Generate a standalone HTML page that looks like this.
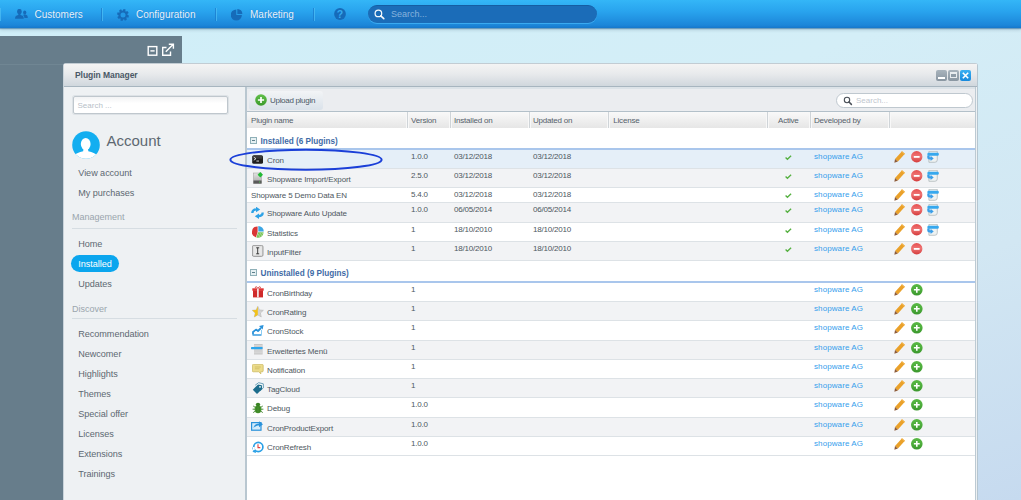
<!DOCTYPE html>
<html><head><meta charset="utf-8"><style>
*{box-sizing:border-box}
html,body{margin:0;padding:0}
body{width:1021px;height:500px;overflow:hidden;position:relative;font-family:"Liberation Sans",sans-serif;
background:linear-gradient(160deg,#cfeef8 0%,#d4eef7 40%,#d2e7f3 70%,#c6daef 100%);}
.abs{position:absolute}
#top{position:absolute;left:0;top:0;width:1021px;height:28px;background:linear-gradient(#34b6f7 0%,#29a4ee 40%,#1c86d9 90%,#1677cb 100%);box-shadow:0 1px 1px rgba(20,90,150,.45),0 2px 3px rgba(70,110,130,.25)}
#top .sep{position:absolute;top:8px;width:2px;height:13px;border-left:1px solid #1b7acb;border-right:1px solid #4fc0f5;opacity:.7}
#top .lbl{position:absolute;top:9px;font-size:10px;line-height:11px;color:#e6f4fd;text-shadow:0 0 1px #1a6fc0}
#top svg{position:absolute}
#srch{position:absolute;left:368px;top:5px;width:229px;height:18px;border-radius:9px;background:#1b6cb8;border-top:1px solid #155da3;box-shadow:0 1px 0 #3aaaf0}
#srch span{position:absolute;left:23px;top:3px;font-size:9px;color:#86b3dd;line-height:11px}
#panel{position:absolute;left:0;top:36px;width:182px;height:464px;background:#677d8b}
#win{position:absolute;left:63px;top:63px;width:915px;height:460px;border:1px solid #c9d3da;border-top-color:#c2ccd3;border-right-color:#b6c6d0;border-radius:3px 3px 0 0;background:#eef1f3}
#whead{position:absolute;left:0;top:0;width:913px;height:23px;background:linear-gradient(#f4f4f4,#e8eaec 45%,#d0d7dd);border-bottom:1px solid #a7b5bf}
#whead .ttl{position:absolute;left:11px;top:6px;font-size:8.5px;font-weight:bold;color:#4a5866;line-height:10px;letter-spacing:-0.05px}
.wb{position:absolute;top:6px;width:11px;height:11px;border-radius:2px}
#side{position:absolute;left:0;top:23px;width:181px;height:440px;background:#eef1f3}
#sfield{position:absolute;left:8.5px;top:9px;width:155px;height:18px;border:1px solid #bfc7cd;border-radius:2px;background:linear-gradient(#f2f3f4,#fff 40%);box-shadow:0 0 0 1px #dde2e6}
#sfield span{position:absolute;left:4px;top:3.5px;font-size:8px;color:#b7c0c8;line-height:10px}
.sn{position:absolute;left:14.3px;font-size:9.1px;line-height:11px;color:#5d6871;letter-spacing:-0.05px}
.sn.act{color:#fff}
.sh{position:absolute;left:8px;font-size:9px;line-height:11px;color:#9aa5ad}
.sline{position:absolute;left:8px;width:165px;height:1px;background:#d6dde2}
#grid{position:absolute;left:181px;top:23px;width:731px;height:440px;background:#fff;border-left:2px solid #b9c7d0;border-right:1px solid #bccad3}
#tbar{position:absolute;left:0;top:0;width:728px;height:25px;background:#ebedf0;border-top:2px solid #dce3e8;border-bottom:1px solid #b3c0c9}
#ubtn{position:absolute;left:2px;top:1.5px;width:74px;height:19px;border-radius:3px;background:linear-gradient(#f2f4f6,#dae2ea);}
#ubtn span{position:absolute;left:21px;top:5px;font-size:8px;color:#4a5866;line-height:9px;letter-spacing:-0.3px}
#gsrch{position:absolute;left:589px;top:4px;width:137px;height:15px;border-radius:8px;border:1px solid #bfc8cf;background:#fff}
#gsrch span{position:absolute;left:19px;top:2px;font-size:8px;color:#bfc7cf;line-height:9px}
#ghead{position:absolute;left:0;top:25px;width:728px;height:16px;background:linear-gradient(#f9f9f9,#e6e6e6);}
#ghead .h{position:absolute;top:4px;font-size:8px;line-height:9px;color:#55606a;letter-spacing:-0.2px}
#ghead .cs{position:absolute;top:0;width:1px;height:16px;background:#cfd4d8;box-shadow:-1px 0 0 #f8f8f8,1px 0 0 #f8f8f8}
.row{position:absolute;left:0;width:728px;border-bottom:1px solid #dde2e6;}
.row .t{position:absolute;top:1.5px;font-size:8px;line-height:9px;color:#4d5760;white-space:nowrap}
.row .v{letter-spacing:-0.2px}
.row .nm{letter-spacing:-0.12px}
.row .dev{color:#379eec;letter-spacing:0.1px}
.row .ic{position:absolute;line-height:0}
.row .ic svg{display:block}
.grp{position:absolute;left:0;width:728px;background:#fff;border-bottom:2px solid #a9c6ec}
.grp span.gt{position:absolute;left:13.5px;font-size:8.2px;font-weight:bold;line-height:9px;color:#3f6ba6}
.grp .gi{position:absolute;left:3px;width:7px;height:7px;border:1px solid #8fb0b8;background:#e6f0f2}
.grp .gi:after{content:"";position:absolute;left:1px;top:2px;width:3px;height:1px;background:#5d808c}

</style></head><body>
<div id="top">
  <div class="sep" style="left:-1px"></div>
  <svg style="left:15px;top:9px" width="13" height="11" viewBox="0 0 13 11"><ellipse cx="4.4" cy="2.6" rx="2.3" ry="2.7" fill="#166bb9"/><rect x="3.3" y="4.6" width="2.2" height="2" fill="#166bb9"/><path d="M0 9.8 C0 7.4 1.2 6.5 3.2 6.1 H5.6 C7.6 6.5 8.8 7.4 8.8 9.8Z" fill="#166bb9"/><ellipse cx="9.7" cy="3.5" rx="1.6" ry="1.9" fill="#166bb9"/><path d="M8.6 5.6 H10.6 C12 6 12.8 6.8 12.8 8.9 H9.4 C9.3 7.6 9 6.6 8.2 6.2Z" fill="#166bb9"/></svg>
  <span class="lbl" style="left:34.5px">Customers</span>
  <div class="sep" style="left:101px"></div>
  <svg style="left:117px;top:8.8px" width="12" height="12" viewBox="0 0 12 12"><path d="M10.37 5.52 L11.96 6.65 L11.38 8.65 L9.76 8.28 L9.43 8.75 L9.76 10.68 L7.93 11.68 L7.05 10.27 L6.48 10.37 L5.35 11.96 L3.35 11.38 L3.72 9.76 L3.25 9.43 L1.32 9.76 L0.32 7.93 L1.73 7.05 L1.63 6.48 L0.04 5.35 L0.62 3.35 L2.24 3.72 L2.57 3.25 L2.24 1.32 L4.07 0.32 L4.95 1.73 L5.52 1.63 L6.65 0.04 L8.65 0.62 L8.28 2.24 L8.75 2.57 L10.68 2.24 L11.68 4.07 L10.27 4.95Z" fill="#166bb9"/><circle cx="6" cy="6" r="2.5" fill="#2398e6"/></svg>
  <span class="lbl" style="left:136px">Configuration</span>
  <div class="sep" style="left:215px"></div>
  <svg style="left:231px;top:8.5px" width="12" height="12" viewBox="0 0 12 12"><path d="M5.3 0.4 V6 H10.9 A5.6 5.6 0 1 1 5.3 0.4Z" fill="#166bb9"/><path d="M6.3 0.1 A5.4 5.4 0 0 1 11.4 5 H6.3Z" fill="#166bb9"/></svg>
  <span class="lbl" style="left:250px">Marketing</span>
  <div class="sep" style="left:313px"></div>
  <svg style="left:334px;top:7.8px" width="12" height="12" viewBox="0 0 12 12"><circle cx="6" cy="6" r="5.9" fill="#166bb9"/><text x="6" y="9.8" text-anchor="middle" font-family="Liberation Sans" font-weight="bold" font-size="10.5" fill="#35aaf0">?</text></svg>
  <div id="srch"><svg style="left:6px;top:2.8px" width="12" height="12" viewBox="0 0 12 12"><circle cx="4.4" cy="4.4" r="3.3" stroke="#f4f8fc" stroke-width="1.25" fill="none"/><path d="M6.8 6.8 L9.8 9.6" stroke="#f4f8fc" stroke-width="1.6" stroke-linecap="round"/></svg><span>Search...</span></div>
</div>
<div id="panel">
  <div class="abs" style="left:0;top:28px;width:63px;height:1px;background:#708693"></div>
  <svg style="position:absolute;left:147px;top:6px" width="28" height="14" viewBox="0 0 28 14"><rect x="1.2" y="4.6" width="8.6" height="8.6" stroke="#fff" stroke-width="1.4" fill="none"/><rect x="3.4" y="8.2" width="4.2" height="1.4" fill="#fff"/><path d="M19.5 5.5 H15.7 V13.2 H23.5 V9.5" stroke="#fff" stroke-width="1.4" fill="none"/><path d="M18.8 9.8 L26 2.6 M21.8 2.2 H26.4 V6.8" stroke="#fff" stroke-width="1.4" fill="none"/></svg>
</div>
<div id="win">
  <div id="whead"><span class="ttl">Plugin Manager</span>
    <div class="wb" style="left:872px;background:linear-gradient(#a9b4bd,#8996a1)"><div class="abs" style="left:2px;top:7px;width:7px;height:2px;background:#fff"></div></div>
    <div class="wb" style="left:884px;background:linear-gradient(#a9b4bd,#8996a1)"><div class="abs" style="left:2px;top:2px;width:7px;height:6px;border:1px solid #e8ecef;border-top-width:2px;background:#8f9ca7"></div></div>
    <div class="wb" style="left:896px;background:linear-gradient(#3bb0f2,#1789dc)"><svg style="position:absolute;left:2px;top:2px" width="7" height="7" viewBox="0 0 7 7"><path d="M0.8 0.8 L6.2 6.2 M6.2 0.8 L0.8 6.2" stroke="#fff" stroke-width="1.6"/></svg></div>
  </div>
  <div id="side">
    <div id="sfield"><span>Search ...</span></div>
    <svg style="position:absolute;left:7.7px;top:43.7px" width="28" height="28" viewBox="0 0 28 28"><defs><clipPath id="cc"><circle cx="14" cy="14" r="13.8"/></clipPath></defs><circle cx="14" cy="14" r="13.8" fill="#13aef0"/><g clip-path="url(#cc)" fill="#fff"><ellipse cx="13.7" cy="13" rx="4.9" ry="6"/><path d="M11.5 17 H16 L16.3 20.3 C20.5 21.3 23.5 22.5 25 24.5 V29 H2 V24.5 C4 22.5 7 21.3 11.2 20.3Z"/></g></svg>
    <div class="abs" style="left:42.5px;top:45px;font-size:15px;line-height:17px;color:#5d6871">Account</div>
    <div class="sh" style="top:124.5px">Management</div>
    <div class="sline" style="top:140.5px"></div>
    <div class="abs" style="left:7px;top:168px;width:48px;height:17px;border-radius:9px;background:#0ba6ee"></div>
    <div class="sh" style="top:216.5px">Discover</div>
    <div class="sline" style="top:231px"></div>
    <div class="sn" style="top:80.9px">View account</div>
<div class="sn" style="top:100.9px">My purchases</div>
<div class="sn" style="top:151.9px">Home</div>
<div class="sn act" style="top:171.89999999999998px">Installed</div>
<div class="sn" style="top:191.89999999999998px">Updates</div>
<div class="sn" style="top:241.89999999999998px">Recommendation</div>
<div class="sn" style="top:261.9px">Newcomer</div>
<div class="sn" style="top:281.9px">Highlights</div>
<div class="sn" style="top:301.9px">Themes</div>
<div class="sn" style="top:321.9px">Special offer</div>
<div class="sn" style="top:341.9px">Licenses</div>
<div class="sn" style="top:361.9px">Extensions</div>
<div class="sn" style="top:381.9px">Trainings</div>
  </div>
  <div id="grid">
    <div id="tbar">
      <div id="ubtn"><svg style="position:absolute;left:6px;top:3.5px" width="12" height="12" viewBox="0 0 12 12"><defs><linearGradient id="gg2" x1="0" y1="0" x2="0" y2="1"><stop offset="0" stop-color="#62c04a"/><stop offset="1" stop-color="#3a9a2c"/></linearGradient></defs><circle cx="6" cy="6" r="5.8" fill="url(#gg2)"/><path d="M6 2.9 V9.1 M2.9 6 H9.1" stroke="#fff" stroke-width="1.7"/></svg><span>Upload plugin</span></div>
      <div id="gsrch"><svg style="position:absolute;left:6px;top:2px" width="10" height="10" viewBox="0 0 10 10"><circle cx="4" cy="4" r="2.7" stroke="#4a5058" stroke-width="1.1" fill="none"/><path d="M6 6 L8.4 8.4" stroke="#4a5058" stroke-width="1.5" stroke-linecap="round"/></svg><span>Search...</span></div>
    </div>
    <div id="ghead">
      <span class="h" style="left:4px">Plugin name</span>
      <div class="cs" style="left:160px"></div><span class="h" style="left:164px">Version</span>
      <div class="cs" style="left:203px"></div><span class="h" style="left:207px">Installed on</span>
      <div class="cs" style="left:282px"></div><span class="h" style="left:286px">Updated on</span>
      <div class="cs" style="left:361px"></div><span class="h" style="left:366.3px">License</span>
      <div class="cs" style="left:520px"></div><span class="h" style="left:531px">Active</span>
      <div class="cs" style="left:563px"></div><span class="h" style="left:567px">Developed by</span>
      <div class="cs" style="left:642px"></div>
    </div>
    <div class="grp" style="top:41px;height:22px"><div class="gi" style="top:9px"></div><span class="gt" style="top:8.5px">Installed (6 Plugins)</span></div>
    <div class="row" style="top:63px;height:19px;background:#e5eff8">
<span class="ic" style="left:5px;top:4.7px"><svg width="12" height="10" viewBox="0 0 12 10"><rect x="0.2" y="0.2" width="10.8" height="8.6" rx="1.6" fill="#1e1e1e"/><rect x="0.8" y="0.8" width="9.6" height="3" rx="1" fill="#3a3a3a"/><path d="M1.8 2.2 L4 3.7 L1.8 5.2" stroke="#e8e8e8" stroke-width="0.9" fill="none"/><rect x="4.4" y="5.6" width="2.6" height="0.9" fill="#e8e8e8"/></svg></span>
<span class="t nm" style="left:20px;top:6px">Cron</span>
<span class="t v" style="left:164px">1.0.0</span>
<span class="t v" style="left:207px">03/12/2018</span>
<span class="t v" style="left:286px">03/12/2018</span>
<span class="ic" style="left:538px;top:4.6px"><svg width="8" height="6" viewBox="0 0 8 6"><path d="M0.6 2.5 L2.4 4.2 L6.1 0.7" stroke="#55b040" stroke-width="1.35" fill="none"/></svg></span>
<span class="t dev" style="left:567px">shopware AG</span>
<span class="ic" style="left:646.5px;top:1px"><svg width="12" height="13" viewBox="0 0 12 13"><path d="M8 0.2 L10.9 2.7 L3.9 10.6 L1 8.1Z" fill="#eaa12a"/><path d="M8 0.2 L10.9 2.7 L10.2 3.5 L7.3 1Z" fill="#f2b44a"/><path d="M1 8.1 L3.9 10.6 L0.4 11.8Z" fill="#8c5a38"/></svg></span>
<span class="ic" style="left:663.5px;top:1px"><svg width="12" height="12" viewBox="0 0 12 12"><defs><linearGradient id="rg" x1="0" y1="0" x2="0" y2="1"><stop offset="0" stop-color="#e65050"/><stop offset="0.45" stop-color="#ee7474"/><stop offset="1" stop-color="#d43c3c"/></linearGradient></defs><circle cx="5.7" cy="5.8" r="5.7" fill="url(#rg)"/><rect x="2.8" y="5" width="5.8" height="1.8" fill="#fff"/></svg></span>
<span class="ic" style="left:680px;top:1.2px"><svg width="13" height="12" viewBox="0 0 13 12"><path d="M1.9 0.3 H10.3 V8.8 Q10.3 11.3 7.8 11.3 H1.9Z" fill="#eef2f2" stroke="#a9b2b4" stroke-width="0.7"/><rect x="0.4" y="1.8" width="11.4" height="3" rx="1.2" fill="#36a8ee"/><path d="M1.4 4.4 V6.4 Q1.4 7.4 2.4 7.4 H4" stroke="#3a9ee8" stroke-width="2.3" fill="none"/><path d="M3.6 4.7 L6.7 7.4 L3.6 10.1Z" fill="#3a9ee8"/></svg></span>
</div>
<div class="row" style="top:82px;height:19px;background:#f2f3f5">
<span class="ic" style="left:6px;top:3px"><svg width="12" height="12" viewBox="0 0 12 12"><defs><linearGradient id="ig" x1="0" y1="0" x2="0" y2="1"><stop offset="0" stop-color="#e4e4e4"/><stop offset="0.7" stop-color="#b8b8b8"/><stop offset="1" stop-color="#8a8a8a"/></linearGradient></defs><rect x="0.5" y="1" width="8" height="10.5" fill="url(#ig)" stroke="#9a9a9a" stroke-width="0.5"/><rect x="0.5" y="8.5" width="8" height="3" fill="#5a5a5a"/><rect x="6" y="9.6" width="1.2" height="0.9" fill="#5c5"/><path d="M7.3 0 L10 2.7 L7.3 5.4 L4.6 2.7Z" fill="#22bb33"/></svg></span>
<span class="t nm" style="left:20px;top:6px">Shopware Import/Export</span>
<span class="t v" style="left:164px">2.5.0</span>
<span class="t v" style="left:207px">03/12/2018</span>
<span class="t v" style="left:286px">03/12/2018</span>
<span class="ic" style="left:538px;top:4.6px"><svg width="8" height="6" viewBox="0 0 8 6"><path d="M0.6 2.5 L2.4 4.2 L6.1 0.7" stroke="#55b040" stroke-width="1.35" fill="none"/></svg></span>
<span class="t dev" style="left:567px">shopware AG</span>
<span class="ic" style="left:646.5px;top:1px"><svg width="12" height="13" viewBox="0 0 12 13"><path d="M8 0.2 L10.9 2.7 L3.9 10.6 L1 8.1Z" fill="#eaa12a"/><path d="M8 0.2 L10.9 2.7 L10.2 3.5 L7.3 1Z" fill="#f2b44a"/><path d="M1 8.1 L3.9 10.6 L0.4 11.8Z" fill="#8c5a38"/></svg></span>
<span class="ic" style="left:663.5px;top:1px"><svg width="12" height="12" viewBox="0 0 12 12"><defs><linearGradient id="rg" x1="0" y1="0" x2="0" y2="1"><stop offset="0" stop-color="#e65050"/><stop offset="0.45" stop-color="#ee7474"/><stop offset="1" stop-color="#d43c3c"/></linearGradient></defs><circle cx="5.7" cy="5.8" r="5.7" fill="url(#rg)"/><rect x="2.8" y="5" width="5.8" height="1.8" fill="#fff"/></svg></span>
<span class="ic" style="left:680px;top:1.2px"><svg width="13" height="12" viewBox="0 0 13 12"><path d="M1.9 0.3 H10.3 V8.8 Q10.3 11.3 7.8 11.3 H1.9Z" fill="#eef2f2" stroke="#a9b2b4" stroke-width="0.7"/><rect x="0.4" y="1.8" width="11.4" height="3" rx="1.2" fill="#36a8ee"/><path d="M1.4 4.4 V6.4 Q1.4 7.4 2.4 7.4 H4" stroke="#3a9ee8" stroke-width="2.3" fill="none"/><path d="M3.6 4.7 L6.7 7.4 L3.6 10.1Z" fill="#3a9ee8"/></svg></span>
</div>
<div class="row" style="top:101px;height:15px;background:#fff">
<span class="t nm" style="left:4px;top:2.5px">Shopware 5 Demo Data EN</span>
<span class="t v" style="left:164px">5.4.0</span>
<span class="t v" style="left:207px">03/12/2018</span>
<span class="t v" style="left:286px">03/12/2018</span>
<span class="ic" style="left:538px;top:4.6px"><svg width="8" height="6" viewBox="0 0 8 6"><path d="M0.6 2.5 L2.4 4.2 L6.1 0.7" stroke="#55b040" stroke-width="1.35" fill="none"/></svg></span>
<span class="t dev" style="left:567px">shopware AG</span>
<span class="ic" style="left:646.5px;top:1px"><svg width="12" height="13" viewBox="0 0 12 13"><path d="M8 0.2 L10.9 2.7 L3.9 10.6 L1 8.1Z" fill="#eaa12a"/><path d="M8 0.2 L10.9 2.7 L10.2 3.5 L7.3 1Z" fill="#f2b44a"/><path d="M1 8.1 L3.9 10.6 L0.4 11.8Z" fill="#8c5a38"/></svg></span>
<span class="ic" style="left:663.5px;top:1px"><svg width="12" height="12" viewBox="0 0 12 12"><defs><linearGradient id="rg" x1="0" y1="0" x2="0" y2="1"><stop offset="0" stop-color="#e65050"/><stop offset="0.45" stop-color="#ee7474"/><stop offset="1" stop-color="#d43c3c"/></linearGradient></defs><circle cx="5.7" cy="5.8" r="5.7" fill="url(#rg)"/><rect x="2.8" y="5" width="5.8" height="1.8" fill="#fff"/></svg></span>
<span class="ic" style="left:680px;top:1.2px"><svg width="13" height="12" viewBox="0 0 13 12"><path d="M1.9 0.3 H10.3 V8.8 Q10.3 11.3 7.8 11.3 H1.9Z" fill="#eef2f2" stroke="#a9b2b4" stroke-width="0.7"/><rect x="0.4" y="1.8" width="11.4" height="3" rx="1.2" fill="#36a8ee"/><path d="M1.4 4.4 V6.4 Q1.4 7.4 2.4 7.4 H4" stroke="#3a9ee8" stroke-width="2.3" fill="none"/><path d="M3.6 4.7 L6.7 7.4 L3.6 10.1Z" fill="#3a9ee8"/></svg></span>
</div>
<div class="row" style="top:116px;height:20px;background:#f2f3f5">
<span class="ic" style="left:4px;top:3.8px"><svg width="13" height="13" viewBox="0 0 13 13"><path d="M1.3 6 C1.3 3.6 2.8 2.4 5.6 2.4" stroke="#2ea2e6" stroke-width="2.3" fill="none"/><path d="M5 -0.3 L9.2 2.5 L5 5.3Z" fill="#2ea2e6"/><path d="M11.7 5.6 C11.7 8 10.2 9.2 7.4 9.2" stroke="#2ea2e6" stroke-width="2.3" fill="none"/><path d="M8 6.4 L3.8 9.2 L8 12Z" fill="#2ea2e6"/></svg></span>
<span class="t nm" style="left:20px;top:6px">Shopware Auto Update</span>
<span class="t v" style="left:164px">1.0.0</span>
<span class="t v" style="left:207px">06/05/2014</span>
<span class="t v" style="left:286px">06/05/2014</span>
<span class="ic" style="left:538px;top:4.6px"><svg width="8" height="6" viewBox="0 0 8 6"><path d="M0.6 2.5 L2.4 4.2 L6.1 0.7" stroke="#55b040" stroke-width="1.35" fill="none"/></svg></span>
<span class="t dev" style="left:567px">shopware AG</span>
<span class="ic" style="left:646.5px;top:1px"><svg width="12" height="13" viewBox="0 0 12 13"><path d="M8 0.2 L10.9 2.7 L3.9 10.6 L1 8.1Z" fill="#eaa12a"/><path d="M8 0.2 L10.9 2.7 L10.2 3.5 L7.3 1Z" fill="#f2b44a"/><path d="M1 8.1 L3.9 10.6 L0.4 11.8Z" fill="#8c5a38"/></svg></span>
<span class="ic" style="left:663.5px;top:1px"><svg width="12" height="12" viewBox="0 0 12 12"><defs><linearGradient id="rg" x1="0" y1="0" x2="0" y2="1"><stop offset="0" stop-color="#e65050"/><stop offset="0.45" stop-color="#ee7474"/><stop offset="1" stop-color="#d43c3c"/></linearGradient></defs><circle cx="5.7" cy="5.8" r="5.7" fill="url(#rg)"/><rect x="2.8" y="5" width="5.8" height="1.8" fill="#fff"/></svg></span>
<span class="ic" style="left:680px;top:1.2px"><svg width="13" height="12" viewBox="0 0 13 12"><path d="M1.9 0.3 H10.3 V8.8 Q10.3 11.3 7.8 11.3 H1.9Z" fill="#eef2f2" stroke="#a9b2b4" stroke-width="0.7"/><rect x="0.4" y="1.8" width="11.4" height="3" rx="1.2" fill="#36a8ee"/><path d="M1.4 4.4 V6.4 Q1.4 7.4 2.4 7.4 H4" stroke="#3a9ee8" stroke-width="2.3" fill="none"/><path d="M3.6 4.7 L6.7 7.4 L3.6 10.1Z" fill="#3a9ee8"/></svg></span>
</div>
<div class="row" style="top:136px;height:19px;background:#fff">
<span class="ic" style="left:4.5px;top:2.8px"><svg width="12" height="12" viewBox="0 0 12 12"><path d="M5.6 6 L5.6 0.5 A5.5 5.5 0 0 0 4 11.3Z" fill="#d93636"/><path d="M6.3 5.4 L6.3 0 A5.5 5.5 0 0 1 11.8 5.4Z" fill="#3ca6e4"/><path d="M6 6.2 L11.6 6.2 A5.6 5.6 0 0 1 4.4 11.5Z" fill="#7ac35a"/><path d="M6 8 L8 11 M8 7 L10 10 M10 6.5 L11 8" stroke="#c8eab8" stroke-width="0.6"/></svg></span>
<span class="t nm" style="left:20px;top:6px">Statistics</span>
<span class="t v" style="left:164px">1</span>
<span class="t v" style="left:207px">18/10/2010</span>
<span class="t v" style="left:286px">18/10/2010</span>
<span class="ic" style="left:538px;top:4.6px"><svg width="8" height="6" viewBox="0 0 8 6"><path d="M0.6 2.5 L2.4 4.2 L6.1 0.7" stroke="#55b040" stroke-width="1.35" fill="none"/></svg></span>
<span class="t dev" style="left:567px">shopware AG</span>
<span class="ic" style="left:646.5px;top:1px"><svg width="12" height="13" viewBox="0 0 12 13"><path d="M8 0.2 L10.9 2.7 L3.9 10.6 L1 8.1Z" fill="#eaa12a"/><path d="M8 0.2 L10.9 2.7 L10.2 3.5 L7.3 1Z" fill="#f2b44a"/><path d="M1 8.1 L3.9 10.6 L0.4 11.8Z" fill="#8c5a38"/></svg></span>
<span class="ic" style="left:663.5px;top:1px"><svg width="12" height="12" viewBox="0 0 12 12"><defs><linearGradient id="rg" x1="0" y1="0" x2="0" y2="1"><stop offset="0" stop-color="#e65050"/><stop offset="0.45" stop-color="#ee7474"/><stop offset="1" stop-color="#d43c3c"/></linearGradient></defs><circle cx="5.7" cy="5.8" r="5.7" fill="url(#rg)"/><rect x="2.8" y="5" width="5.8" height="1.8" fill="#fff"/></svg></span>
<span class="ic" style="left:680px;top:1.2px"><svg width="13" height="12" viewBox="0 0 13 12"><path d="M1.9 0.3 H10.3 V8.8 Q10.3 11.3 7.8 11.3 H1.9Z" fill="#eef2f2" stroke="#a9b2b4" stroke-width="0.7"/><rect x="0.4" y="1.8" width="11.4" height="3" rx="1.2" fill="#36a8ee"/><path d="M1.4 4.4 V6.4 Q1.4 7.4 2.4 7.4 H4" stroke="#3a9ee8" stroke-width="2.3" fill="none"/><path d="M3.6 4.7 L6.7 7.4 L3.6 10.1Z" fill="#3a9ee8"/></svg></span>
</div>
<div class="row" style="top:155px;height:19px;background:#f2f3f5">
<span class="ic" style="left:5px;top:3.2px"><svg width="12" height="12" viewBox="0 0 12 12"><rect x="0.4" y="0.4" width="10.6" height="11" rx="1.4" fill="#d6d6d6" stroke="#8c8c8c" stroke-width="0.8"/><rect x="1.5" y="1.5" width="8.4" height="8.8" fill="#e8e8e8"/><path d="M4.2 2.8 H7.2 M5.7 2.8 V8.8 M4.2 8.8 H7.2" stroke="#2a2a2a" stroke-width="0.9"/></svg></span>
<span class="t nm" style="left:20px;top:6px">InputFilter</span>
<span class="t v" style="left:164px">1</span>
<span class="t v" style="left:207px">18/10/2010</span>
<span class="t v" style="left:286px">18/10/2010</span>
<span class="ic" style="left:538px;top:4.6px"><svg width="8" height="6" viewBox="0 0 8 6"><path d="M0.6 2.5 L2.4 4.2 L6.1 0.7" stroke="#55b040" stroke-width="1.35" fill="none"/></svg></span>
<span class="t dev" style="left:567px">shopware AG</span>
<span class="ic" style="left:646.5px;top:1px"><svg width="12" height="13" viewBox="0 0 12 13"><path d="M8 0.2 L10.9 2.7 L3.9 10.6 L1 8.1Z" fill="#eaa12a"/><path d="M8 0.2 L10.9 2.7 L10.2 3.5 L7.3 1Z" fill="#f2b44a"/><path d="M1 8.1 L3.9 10.6 L0.4 11.8Z" fill="#8c5a38"/></svg></span>
<span class="ic" style="left:663.5px;top:1px"><svg width="12" height="12" viewBox="0 0 12 12"><defs><linearGradient id="rg" x1="0" y1="0" x2="0" y2="1"><stop offset="0" stop-color="#e65050"/><stop offset="0.45" stop-color="#ee7474"/><stop offset="1" stop-color="#d43c3c"/></linearGradient></defs><circle cx="5.7" cy="5.8" r="5.7" fill="url(#rg)"/><rect x="2.8" y="5" width="5.8" height="1.8" fill="#fff"/></svg></span>
</div>
<div class="row" style="top:196px;height:19px;background:#fff">
<span class="ic" style="left:4.5px;top:3px"><svg width="12" height="12" viewBox="0 0 12 12"><rect x="1" y="4.2" width="10" height="7.2" fill="#cf2a2a"/><rect x="0.3" y="2.3" width="11.4" height="2.4" fill="#e03434"/><rect x="5" y="2.3" width="1.8" height="9.1" fill="#f4dede"/><path d="M5.9 2.2 C4.5 0 2.8 0.6 3.6 2.2 M5.9 2.2 C7.3 0 9 0.6 8.2 2.2" stroke="#d03030" stroke-width="0.9" fill="none"/></svg></span>
<span class="t nm" style="left:20px;top:6px">CronBirthday</span>
<span class="t v" style="left:164px">1</span>
<span class="t dev" style="left:567px">shopware AG</span>
<span class="ic" style="left:646.5px;top:0.5px"><svg width="12" height="13" viewBox="0 0 12 13"><path d="M8 0.2 L10.9 2.7 L3.9 10.6 L1 8.1Z" fill="#eaa12a"/><path d="M8 0.2 L10.9 2.7 L10.2 3.5 L7.3 1Z" fill="#f2b44a"/><path d="M1 8.1 L3.9 10.6 L0.4 11.8Z" fill="#8c5a38"/></svg></span>
<span class="ic" style="left:663.5px;top:0.5px"><svg width="12" height="12" viewBox="0 0 12 12"><defs><linearGradient id="gg" x1="0" y1="0" x2="0" y2="1"><stop offset="0" stop-color="#58b844"/><stop offset="0.5" stop-color="#4eae3c"/><stop offset="1" stop-color="#3a962c"/></linearGradient></defs><circle cx="5.8" cy="5.8" r="5.8" fill="url(#gg)"/><path d="M5.8 2.9 V8.7 M2.9 5.8 H8.7" stroke="#fff" stroke-width="1.6"/></svg></span>
</div>
<div class="row" style="top:215px;height:19px;background:#f2f3f5">
<span class="ic" style="left:4.5px;top:3.8px"><svg width="12" height="12" viewBox="0 0 12 12"><path d="M5.8 0.3 L7.4 3.9 L11.4 4.3 L8.4 7 L9.3 11 L5.8 8.9 L2.3 11 L3.2 7 L0.2 4.3 L4.2 3.9Z" fill="#d2d2d2" stroke="#b0b0b0" stroke-width="0.5"/><path d="M5.8 0.3 L5.8 8.9 L2.3 11 L3.2 7 L0.2 4.3 L4.2 3.9Z" fill="#f2c21a"/></svg></span>
<span class="t nm" style="left:20px;top:6px">CronRating</span>
<span class="t v" style="left:164px">1</span>
<span class="t dev" style="left:567px">shopware AG</span>
<span class="ic" style="left:646.5px;top:0.5px"><svg width="12" height="13" viewBox="0 0 12 13"><path d="M8 0.2 L10.9 2.7 L3.9 10.6 L1 8.1Z" fill="#eaa12a"/><path d="M8 0.2 L10.9 2.7 L10.2 3.5 L7.3 1Z" fill="#f2b44a"/><path d="M1 8.1 L3.9 10.6 L0.4 11.8Z" fill="#8c5a38"/></svg></span>
<span class="ic" style="left:663.5px;top:0.5px"><svg width="12" height="12" viewBox="0 0 12 12"><defs><linearGradient id="gg" x1="0" y1="0" x2="0" y2="1"><stop offset="0" stop-color="#58b844"/><stop offset="0.5" stop-color="#4eae3c"/><stop offset="1" stop-color="#3a962c"/></linearGradient></defs><circle cx="5.8" cy="5.8" r="5.8" fill="url(#gg)"/><path d="M5.8 2.9 V8.7 M2.9 5.8 H8.7" stroke="#fff" stroke-width="1.6"/></svg></span>
</div>
<div class="row" style="top:234px;height:20px;background:#fff">
<span class="ic" style="left:4.5px;top:4px"><svg width="12" height="11" viewBox="0 0 12 11"><path d="M0.5 10 H9.5" stroke="#2a92da" stroke-width="1.4"/><path d="M1 9.6 V7 L4 4.6 L6 6 L9 3" stroke="#2a92da" stroke-width="1.8" fill="none" stroke-linejoin="round"/><path d="M7 1 L11.6 0 L10.6 4.6Z" fill="#2a92da"/><path d="M9.5 10 V5" stroke="#8ccdf3" stroke-width="1"/></svg></span>
<span class="t nm" style="left:20px;top:6px">CronStock</span>
<span class="t v" style="left:164px">1</span>
<span class="t dev" style="left:567px">shopware AG</span>
<span class="ic" style="left:646.5px;top:0.5px"><svg width="12" height="13" viewBox="0 0 12 13"><path d="M8 0.2 L10.9 2.7 L3.9 10.6 L1 8.1Z" fill="#eaa12a"/><path d="M8 0.2 L10.9 2.7 L10.2 3.5 L7.3 1Z" fill="#f2b44a"/><path d="M1 8.1 L3.9 10.6 L0.4 11.8Z" fill="#8c5a38"/></svg></span>
<span class="ic" style="left:663.5px;top:0.5px"><svg width="12" height="12" viewBox="0 0 12 12"><defs><linearGradient id="gg" x1="0" y1="0" x2="0" y2="1"><stop offset="0" stop-color="#58b844"/><stop offset="0.5" stop-color="#4eae3c"/><stop offset="1" stop-color="#3a962c"/></linearGradient></defs><circle cx="5.8" cy="5.8" r="5.8" fill="url(#gg)"/><path d="M5.8 2.9 V8.7 M2.9 5.8 H8.7" stroke="#fff" stroke-width="1.6"/></svg></span>
</div>
<div class="row" style="top:254px;height:19px;background:#f2f3f5">
<span class="ic" style="left:4px;top:2.8px"><svg width="12" height="11" viewBox="0 0 12 11"><rect x="3" y="0" width="8.6" height="10.5" fill="#c6c6c6"/><path d="M3 1.8 H11.6 M3 5.2 H11.6 M3 7 H11.6 M3 8.8 H11.6" stroke="#e6e6e6" stroke-width="0.7"/><rect x="0" y="3" width="11.6" height="2.2" rx="0.6" fill="#2ea6ec"/></svg></span>
<span class="t nm" style="left:20px;top:6px">Erweitertes Menü</span>
<span class="t v" style="left:164px">1</span>
<span class="t dev" style="left:567px">shopware AG</span>
<span class="ic" style="left:646.5px;top:0.5px"><svg width="12" height="13" viewBox="0 0 12 13"><path d="M8 0.2 L10.9 2.7 L3.9 10.6 L1 8.1Z" fill="#eaa12a"/><path d="M8 0.2 L10.9 2.7 L10.2 3.5 L7.3 1Z" fill="#f2b44a"/><path d="M1 8.1 L3.9 10.6 L0.4 11.8Z" fill="#8c5a38"/></svg></span>
<span class="ic" style="left:663.5px;top:0.5px"><svg width="12" height="12" viewBox="0 0 12 12"><defs><linearGradient id="gg" x1="0" y1="0" x2="0" y2="1"><stop offset="0" stop-color="#58b844"/><stop offset="0.5" stop-color="#4eae3c"/><stop offset="1" stop-color="#3a962c"/></linearGradient></defs><circle cx="5.8" cy="5.8" r="5.8" fill="url(#gg)"/><path d="M5.8 2.9 V8.7 M2.9 5.8 H8.7" stroke="#fff" stroke-width="1.6"/></svg></span>
</div>
<div class="row" style="top:273px;height:19px;background:#fff">
<span class="ic" style="left:4.599999999999994px;top:4.4px"><svg width="12" height="11" viewBox="0 0 12 11"><path d="M1.3 0.4 H10.3 Q11.2 0.4 11.2 1.3 V6.9 Q11.2 7.8 10.3 7.8 H8.6 L8.9 9.9 L6.7 7.8 H1.3 Q0.4 7.8 0.4 6.9 V1.3 Q0.4 0.4 1.3 0.4Z" fill="#ecdc8c" stroke="#c9b65a" stroke-width="0.7"/><path d="M2.8 3 H8.8 M2.8 4.8 H7.5" stroke="#c9b65a" stroke-width="0.7"/></svg></span>
<span class="t nm" style="left:20px;top:6px">Notification</span>
<span class="t v" style="left:164px">1</span>
<span class="t dev" style="left:567px">shopware AG</span>
<span class="ic" style="left:646.5px;top:0.5px"><svg width="12" height="13" viewBox="0 0 12 13"><path d="M8 0.2 L10.9 2.7 L3.9 10.6 L1 8.1Z" fill="#eaa12a"/><path d="M8 0.2 L10.9 2.7 L10.2 3.5 L7.3 1Z" fill="#f2b44a"/><path d="M1 8.1 L3.9 10.6 L0.4 11.8Z" fill="#8c5a38"/></svg></span>
<span class="ic" style="left:663.5px;top:0.5px"><svg width="12" height="12" viewBox="0 0 12 12"><defs><linearGradient id="gg" x1="0" y1="0" x2="0" y2="1"><stop offset="0" stop-color="#58b844"/><stop offset="0.5" stop-color="#4eae3c"/><stop offset="1" stop-color="#3a962c"/></linearGradient></defs><circle cx="5.8" cy="5.8" r="5.8" fill="url(#gg)"/><path d="M5.8 2.9 V8.7 M2.9 5.8 H8.7" stroke="#fff" stroke-width="1.6"/></svg></span>
</div>
<div class="row" style="top:292px;height:19px;background:#f2f3f5">
<span class="ic" style="left:4.599999999999994px;top:2.8px"><svg width="12" height="12" viewBox="0 0 12 12"><path d="M3.2 3.2 L6.6 0.7 L11.3 1.8 L11.4 5.8 L8 9" stroke="#4a8aa8" stroke-width="0.8" fill="#f4f8fa"/><path d="M0.8 7.8 L6 2.6 L9.8 3.2 L10.2 7 L5 12 Z" fill="#1d6d8c"/><circle cx="8" cy="4.8" r="0.9" fill="#fff"/></svg></span>
<span class="t nm" style="left:20px;top:6px">TagCloud</span>
<span class="t v" style="left:164px">1</span>
<span class="t dev" style="left:567px">shopware AG</span>
<span class="ic" style="left:646.5px;top:0.5px"><svg width="12" height="13" viewBox="0 0 12 13"><path d="M8 0.2 L10.9 2.7 L3.9 10.6 L1 8.1Z" fill="#eaa12a"/><path d="M8 0.2 L10.9 2.7 L10.2 3.5 L7.3 1Z" fill="#f2b44a"/><path d="M1 8.1 L3.9 10.6 L0.4 11.8Z" fill="#8c5a38"/></svg></span>
<span class="ic" style="left:663.5px;top:0.5px"><svg width="12" height="12" viewBox="0 0 12 12"><defs><linearGradient id="gg" x1="0" y1="0" x2="0" y2="1"><stop offset="0" stop-color="#58b844"/><stop offset="0.5" stop-color="#4eae3c"/><stop offset="1" stop-color="#3a962c"/></linearGradient></defs><circle cx="5.8" cy="5.8" r="5.8" fill="url(#gg)"/><path d="M5.8 2.9 V8.7 M2.9 5.8 H8.7" stroke="#fff" stroke-width="1.6"/></svg></span>
</div>
<div class="row" style="top:311px;height:20px;background:#fff">
<span class="ic" style="left:5px;top:3.7px"><svg width="12" height="12" viewBox="0 0 12 12"><path d="M1.2 4 L3 5.2 M10.8 4 L9 5.2 M0.6 7.2 H3 M11.4 7.2 H9 M1.2 10.6 L3 9.3 M10.8 10.6 L9 9.3" stroke="#3d7f2a" stroke-width="0.9"/><ellipse cx="6" cy="7.2" rx="3.4" ry="4" fill="#4a9a30"/><ellipse cx="6" cy="2.6" rx="2.2" ry="1.8" fill="#3a8424"/><path d="M6 3.6 V11 M4.3 4.5 V10.2 M7.7 4.5 V10.2" stroke="#2f6e1e" stroke-width="0.6"/></svg></span>
<span class="t nm" style="left:20px;top:6px">Debug</span>
<span class="t v" style="left:164px">1.0.0</span>
<span class="t dev" style="left:567px">shopware AG</span>
<span class="ic" style="left:646.5px;top:0.5px"><svg width="12" height="13" viewBox="0 0 12 13"><path d="M8 0.2 L10.9 2.7 L3.9 10.6 L1 8.1Z" fill="#eaa12a"/><path d="M8 0.2 L10.9 2.7 L10.2 3.5 L7.3 1Z" fill="#f2b44a"/><path d="M1 8.1 L3.9 10.6 L0.4 11.8Z" fill="#8c5a38"/></svg></span>
<span class="ic" style="left:663.5px;top:0.5px"><svg width="12" height="12" viewBox="0 0 12 12"><defs><linearGradient id="gg" x1="0" y1="0" x2="0" y2="1"><stop offset="0" stop-color="#58b844"/><stop offset="0.5" stop-color="#4eae3c"/><stop offset="1" stop-color="#3a962c"/></linearGradient></defs><circle cx="5.8" cy="5.8" r="5.8" fill="url(#gg)"/><path d="M5.8 2.9 V8.7 M2.9 5.8 H8.7" stroke="#fff" stroke-width="1.6"/></svg></span>
</div>
<div class="row" style="top:331px;height:19px;background:#f2f3f5">
<span class="ic" style="left:4px;top:2px"><svg width="13" height="11" viewBox="0 0 13 11"><rect x="0.6" y="2.6" width="9.4" height="7.6" fill="#d4ecfb" stroke="#2a92da" stroke-width="1.2"/><path d="M2.5 8 C3 5 5.5 3.6 8 3.6 V1.2 L12 4.2 L8 7.2 V5.4 C6 5.4 4 6.2 2.5 8Z" fill="#2a92da"/></svg></span>
<span class="t nm" style="left:20px;top:6px">CronProductExport</span>
<span class="t v" style="left:164px">1.0.0</span>
<span class="t dev" style="left:567px">shopware AG</span>
<span class="ic" style="left:646.5px;top:0.5px"><svg width="12" height="13" viewBox="0 0 12 13"><path d="M8 0.2 L10.9 2.7 L3.9 10.6 L1 8.1Z" fill="#eaa12a"/><path d="M8 0.2 L10.9 2.7 L10.2 3.5 L7.3 1Z" fill="#f2b44a"/><path d="M1 8.1 L3.9 10.6 L0.4 11.8Z" fill="#8c5a38"/></svg></span>
<span class="ic" style="left:663.5px;top:0.5px"><svg width="12" height="12" viewBox="0 0 12 12"><defs><linearGradient id="gg" x1="0" y1="0" x2="0" y2="1"><stop offset="0" stop-color="#58b844"/><stop offset="0.5" stop-color="#4eae3c"/><stop offset="1" stop-color="#3a962c"/></linearGradient></defs><circle cx="5.8" cy="5.8" r="5.8" fill="url(#gg)"/><path d="M5.8 2.9 V8.7 M2.9 5.8 H8.7" stroke="#fff" stroke-width="1.6"/></svg></span>
</div>
<div class="row" style="top:350px;height:19px;background:#fff">
<span class="ic" style="left:4.5px;top:3.7px"><svg width="12" height="12" viewBox="0 0 12 12"><circle cx="6.3" cy="6" r="4.6" stroke="#2aa0e6" stroke-width="1.7" fill="#fff"/><path d="M0 6.5 L3.2 6.5 L1.3 10.2Z" fill="#2aa0e6"/><rect x="0.8" y="6" width="2" height="3" fill="#fff"/><path d="M0.3 10.8 L3.6 8.6 L4 12Z" fill="#2aa0e6"/><path d="M6 3.2 V6.6 H8.3" stroke="#e04040" stroke-width="1.1" fill="none"/></svg></span>
<span class="t nm" style="left:20px;top:6px">CronRefresh</span>
<span class="t v" style="left:164px">1.0.0</span>
<span class="t dev" style="left:567px">shopware AG</span>
<span class="ic" style="left:646.5px;top:0.5px"><svg width="12" height="13" viewBox="0 0 12 13"><path d="M8 0.2 L10.9 2.7 L3.9 10.6 L1 8.1Z" fill="#eaa12a"/><path d="M8 0.2 L10.9 2.7 L10.2 3.5 L7.3 1Z" fill="#f2b44a"/><path d="M1 8.1 L3.9 10.6 L0.4 11.8Z" fill="#8c5a38"/></svg></span>
<span class="ic" style="left:663.5px;top:0.5px"><svg width="12" height="12" viewBox="0 0 12 12"><defs><linearGradient id="gg" x1="0" y1="0" x2="0" y2="1"><stop offset="0" stop-color="#58b844"/><stop offset="0.5" stop-color="#4eae3c"/><stop offset="1" stop-color="#3a962c"/></linearGradient></defs><circle cx="5.8" cy="5.8" r="5.8" fill="url(#gg)"/><path d="M5.8 2.9 V8.7 M2.9 5.8 H8.7" stroke="#fff" stroke-width="1.6"/></svg></span>
</div>
    <div class="grp" style="top:174px;height:22px"><div class="gi" style="top:8px"></div><span class="gt" style="top:7.5px">Uninstalled (9 Plugins)</span></div>
  </div>
</div>
<svg style="position:absolute;left:0;top:0" width="1021" height="500"><ellipse cx="306" cy="159.7" rx="75.6" ry="10" stroke="#1a3fd8" stroke-width="2" fill="none"/></svg>

</body></html>
